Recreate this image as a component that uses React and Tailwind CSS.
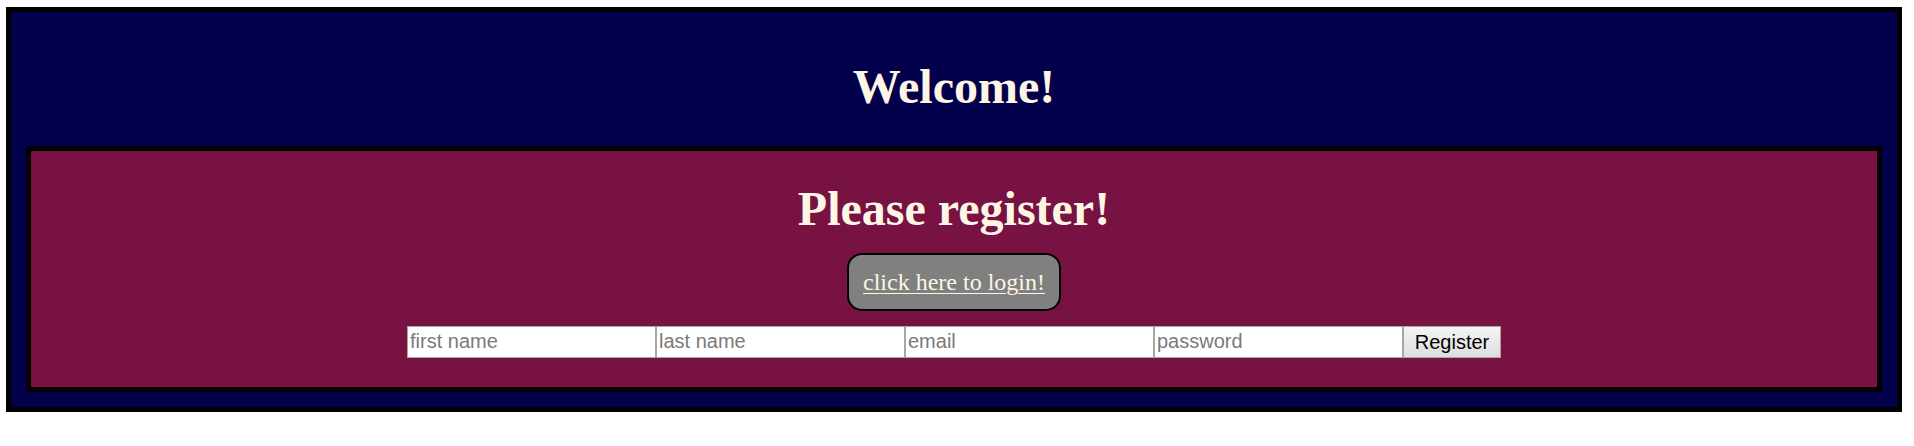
import React from 'react';

const fields = [
  { name: 'firstName', placeholder: 'first name', type: 'text' },
  { name: 'lastName', placeholder: 'last name', type: 'text' },
  { name: 'email', placeholder: 'email', type: 'email' },
  { name: 'password', placeholder: 'password', type: 'password' }
];

const App = () => {
  return (
    <div className="bg-white w-[1914px] h-[446px] pt-[7px] pl-[6px]">
      {/* Welcome panel */}
      <div className="w-[1896px] border-[5px] border-black bg-[#03004b] pt-[48px] pb-[15px]">
        <h1 className="text-center text-[48px] leading-[53px] font-bold text-[#fdf6e4] font-['Liberation_Serif',serif] mb-[33px]">
          Welcome!
        </h1>

        {/* Register panel */}
        <div className="mx-[15px] border-[5px] border-black bg-[#781242] pt-[31px] pb-[29px] flex flex-col items-center">
          <h2 className="text-[48px] leading-[53px] font-bold text-[#fdf6e4] font-['Liberation_Serif',serif]">
            Please register!
          </h2>

          <a
            href="#"
            className="mt-[18px] inline-block border-2 border-black rounded-[15px] bg-[#808080] px-[14px] py-[13.5px] text-[24px] leading-[27px] text-[#fdf6e4] underline underline-offset-[3px] decoration-1 font-['Liberation_Serif',serif]"
          >
            click here to login!
          </a>

          <form className="mt-[15px] flex" onSubmit={(e) => e.preventDefault()}>
            {fields.map((f) => (
              <input
                key={f.name}
                name={f.name}
                type={f.type}
                placeholder={f.placeholder}
                className="w-[249px] h-[32px] bg-white border border-[#a6a6a6] px-[2px] pb-[2px] text-[20px] text-black placeholder:text-[#7a7a7a] font-['Liberation_Sans',Arial,sans-serif] outline-none"
              />
            ))}
            <button
              type="submit"
              className="w-[98px] h-[32px] border border-[#a6a6a6] bg-gradient-to-b from-[#f4f4f4] to-[#dedede] pb-[2px] text-[20px] text-black font-['Liberation_Sans',Arial,sans-serif]"
            >
              Register
            </button>
          </form>
        </div>
      </div>
    </div>
  );
};

export default App;
